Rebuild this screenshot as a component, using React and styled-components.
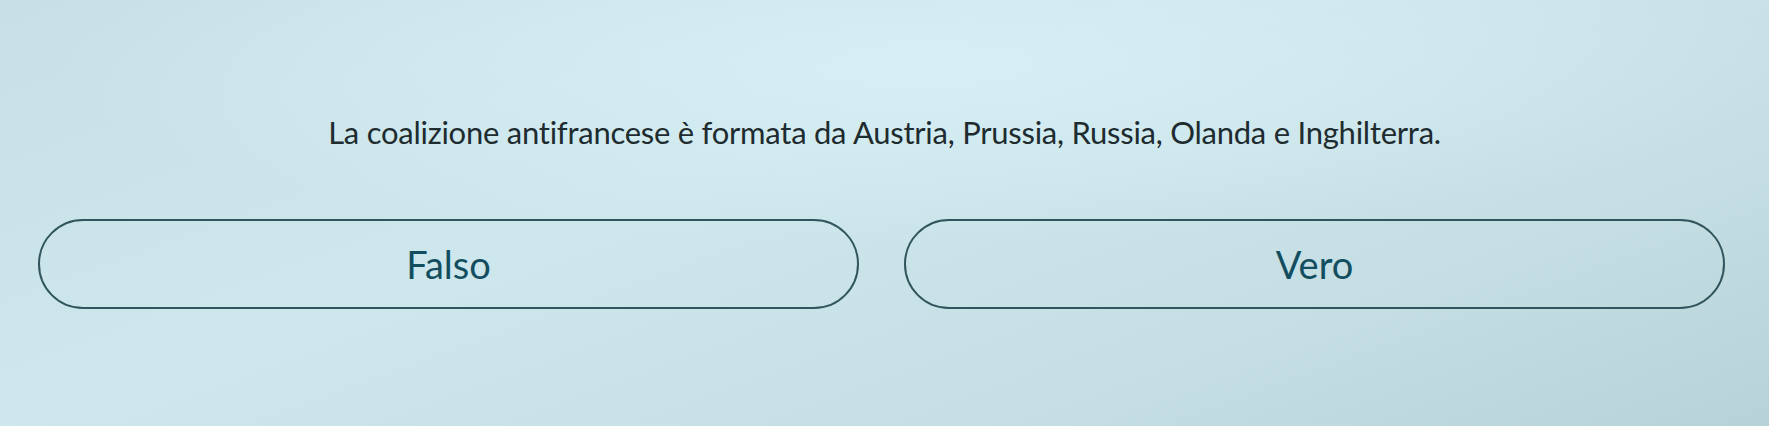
import styled, { createGlobalStyle } from "styled-components";

const GlobalStyle = createGlobalStyle`
  html, body {
    margin: 0;
    padding: 0;
  }

  body {
    font-family: Lato, "Open Sans", sans-serif;
  }
`;

const Screen = styled.main`
  box-sizing: border-box;
  width: 100%;
  height: 426px;
  overflow: hidden;
  display: flex;
  flex-direction: column;
  align-items: center;
  padding-top: 113px;
  background:
    radial-gradient(ellipse 70% 60% at 52% 15%, rgba(214, 240, 246, 0.9), rgba(214, 240, 246, 0) 70%),
    linear-gradient(160deg, #c6e0e5 0%, #cde7ec 40%, #c4dee3 75%, #b8d3d8 100%);
`;

const Question = styled.p`
  margin: 0;
  font-size: 31px;
  line-height: 38px;
  color: #1e2b2f;
  letter-spacing: -0.25px;
`;

const Answers = styled.div`
  box-sizing: border-box;
  width: 100%;
  display: grid;
  grid-template-columns: 1fr 1fr;
  gap: 45px;
  padding: 0 44px 0 38px;
  margin-top: 68px;
`;

const AnswerButton = styled.button`
  height: 90px;
  border: 2px solid #31555d;
  border-radius: 45px;
  background: transparent;
  font-family: Lato, "Open Sans", sans-serif;
  font-size: 38px;
  color: #134e60;
  cursor: pointer;
  display: flex;
  align-items: center;
  justify-content: center;
  padding: 0;
`;

const answers = ["Falso", "Vero"];

export default function App() {
  return (
    <>
      <GlobalStyle />
      <Screen>
        <Question>
          La coalizione antifrancese è formata da Austria, Prussia, Russia,
          Olanda e Inghilterra.
        </Question>
        <Answers>
          {answers.map((label) => (
            <AnswerButton key={label}>{label}</AnswerButton>
          ))}
        </Answers>
      </Screen>
    </>
  );
}
